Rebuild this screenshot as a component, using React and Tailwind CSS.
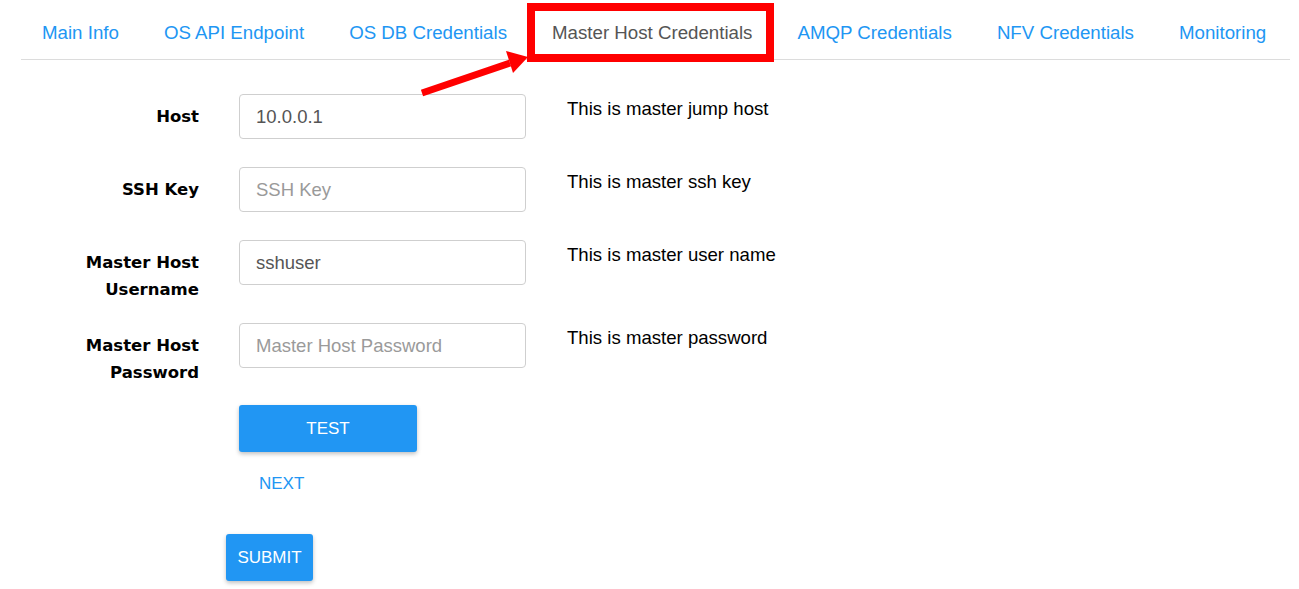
import React from 'react'

const tabs = [
  'Main Info',
  'OS API Endpoint',
  'OS DB Credentials',
  'Master Host Credentials',
  'AMQP Credentials',
  'NFV Credentials',
  'Monitoring',
]

const rows = [
  { label: ['Host'], value: '10.0.0.1', placeholder: 'Host', hint: 'This is master jump host', h: 'h-[73px]' },
  { label: ['SSH Key'], value: '', placeholder: 'SSH Key', hint: 'This is master ssh key', h: 'h-[73px]' },
  { label: ['Master Host', 'Username'], value: 'sshuser', placeholder: 'Master Host Username', hint: 'This is master user name', h: 'h-[83px]' },
  { label: ['Master Host', 'Password'], value: '', placeholder: 'Master Host Password', hint: 'This is master password', h: 'h-[82px]' },
]

function Field({ row }) {
  return (
    <div className={`flex items-start ${row.h}`}>
      <label className="w-[199px] shrink-0 text-right pt-[9px] text-[16.5px] font-bold leading-[27px] text-black font-['DejaVu_Sans',sans-serif]">
        {row.label.map(l => (
          <div key={l}>{l}</div>
        ))}
      </label>
      <input
        className="ml-[40px] w-[287px] h-[45px] shrink-0 rounded-[4px] border border-[#cfcfcf] px-[16px] text-[18.5px] text-[#555] placeholder:text-[#9a9a9a] outline-none"
        defaultValue={row.value}
        placeholder={row.placeholder}
      />
      <p className="ml-[41px] pt-[4px] text-[18.6px] leading-[21px] text-black">{row.hint}</p>
    </div>
  )
}

export default function App() {
  return (
    <div className="relative w-[1299px] h-[589px] bg-white overflow-hidden font-['Liberation_Sans',Arial,sans-serif]">
      {/* tab bar */}
      <div className="ml-[21px] mr-[9px] h-[60px] border-b border-[#dcdcdc]">
        <div className="-ml-[1.5px] flex h-full">
          {tabs.map(t => (
            <div
              key={t}
              className={`flex items-center px-[22.5px] pt-[7px] text-[18.7px] ${
                t === 'Master Host Credentials' ? 'text-[#555]' : 'text-[#2196f3]'
              }`}
            >
              {t}
            </div>
          ))}
        </div>
      </div>

      {/* form */}
      <div className="pt-[34px]">
        {rows.map(r => (
          <Field key={r.hint} row={r} />
        ))}

        <div className="ml-[239px] flex flex-col items-start">
          <button className="w-[178px] h-[47px] rounded-[3px] bg-[#2196f3] text-white text-[17px] shadow-[0_2px_4px_rgba(0,0,0,0.25)]">
            TEST
          </button>
          <button className="mt-[19px] px-[20px] h-[24px] text-[17px] text-[#2196f3]">NEXT</button>
        </div>

        <button className="ml-[226px] mt-[39px] w-[87px] h-[47px] rounded-[3px] bg-[#2196f3] text-white text-[17px] shadow-[0_2px_4px_rgba(0,0,0,0.25)]">
          SUBMIT
        </button>
      </div>

      {/* annotation: red highlight box and arrow */}
      <div className="absolute left-[527px] top-[3px] w-[247px] h-[59px] border-[8px] border-[#ff0000]" />
      <svg className="absolute left-0 top-0" width="1299" height="589">
        <line x1="422" y1="93" x2="510" y2="63" stroke="#ff0000" strokeWidth="7" />
        <polygon points="528,57 506,51 513,73" fill="#ff0000" />
      </svg>
    </div>
  )
}
